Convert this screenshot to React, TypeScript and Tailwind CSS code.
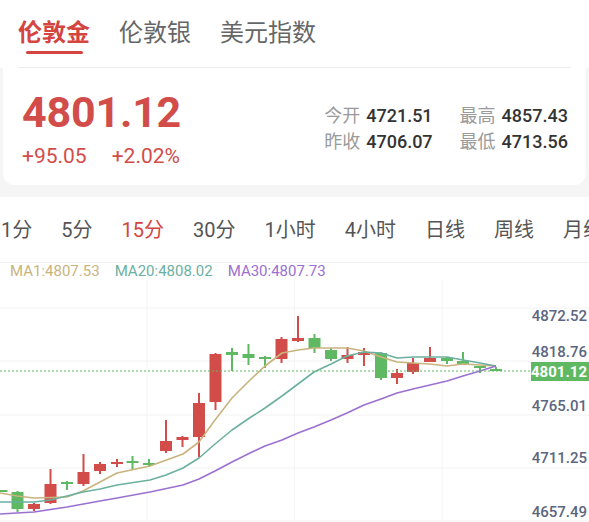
import React from "react";

const FONT = "font-['Roboto','Noto_Sans_CJK_SC',sans-serif]";

const RED = "#d24d4a";
const GREEN = "#5fb963";

// [cx, bodyTop, bodyBottom, wickTop, wickBottom, up]
const candles: [number, number, number, number, number, boolean][] = [
  [1.5, 490, 492, 490, 492, false],
  [17.5, 492, 509, 491, 512, false],
  [34, 504, 509, 503, 511, true],
  [50.5, 484, 503, 469, 504, true],
  [67, 482, 484, 481, 490, false],
  [83.5, 472, 484, 454, 486, true],
  [100, 464, 471, 462, 474, true],
  [117, 462, 464, 459, 467, true],
  [132.5, 461, 463, 456, 469, false],
  [149, 463, 465, 459, 467, false],
  [166, 441, 451, 420, 453, true],
  [182.5, 437, 440, 436, 447, true],
  [199, 403, 437, 393, 457, true],
  [215.5, 354, 402, 353, 410, true],
  [232, 352, 355, 348, 371, false],
  [248.5, 354, 358, 344, 365, false],
  [265, 357, 359, 356, 368, false],
  [281.5, 339, 359, 337, 363, true],
  [298, 338, 341, 316, 342, true],
  [314.5, 338, 348, 334, 353, false],
  [331, 350, 359, 348, 361, false],
  [347.5, 355, 359, 347, 363, true],
  [364, 352, 355, 348, 366, true],
  [381, 353, 378, 352, 380, false],
  [397, 373, 378, 369, 384, true],
  [413, 363, 372, 358, 374, true],
  [430, 358, 362, 347, 362, true],
  [447, 358, 361, 357, 364, false],
  [463, 361, 364, 352, 364, false],
  [480, 366, 368, 366, 373, false],
  [496, 369, 371, 367, 371, false],
];

const ma1 =
  "0,493 17,496 34,498 67,497 83,491 100,482 117,473 150,466 183,454 199,442 215,420 232,398 248,382 265,366 282,353 298,350 314,348 331,348 347,348 364,351 381,357 397,362 413,363 430,364 447,366 463,364 480,365 496,366";
const ma20 =
  "0,502 34,502 50,500 67,496 83,492 100,489 117,485 150,480 166,475 183,468 199,458 215,444 232,430 248,419 265,408 282,396 298,384 314,372 331,364 347,356 364,352 381,353 397,358 413,357 430,357 447,357 463,360 480,363 496,366";
const ma30 =
  "0,514 34,512 67,507 100,501 117,498 150,492 183,485 199,479 215,471 232,462 248,454 265,446 282,440 298,433 314,427 331,420 347,413 364,405 381,399 397,393 413,389 430,385 447,381 463,376 480,371 496,366";

const axis: [string, number][] = [
  ["4872.52", 316],
  ["4818.76", 352],
  ["4765.01", 406],
  ["4711.25", 458],
  ["4657.49", 512],
];

const periods = ["1分", "5分", "15分", "30分", "1小时", "4小时", "日线", "周线", "月线"];

function Stat({ label, value }: { label: string; value: string }) {
  return (
    <div className="flex items-baseline gap-[6px] text-[18px] leading-[26px]">
      <span className="text-[#9a9a9a]">{label}</span>
      <span className="font-medium text-[#333]">{value}</span>
    </div>
  );
}

function Chart() {
  return (
    <svg width={589} height={242} viewBox="0 280 589 242" className="block">
      {[308, 361, 415, 468, 521].map((y) => (
        <line key={y} x1={0} x2={589} y1={y} y2={y} stroke="#f2f2f2" strokeWidth={1} />
      ))}
      {[147, 294.5, 442].map((x) => (
        <line key={x} x1={x} x2={x} y1={280} y2={522} stroke="#f4f4f4" strokeWidth={1} />
      ))}

      {candles.map(([cx, bt, bb, wt, wb, up], i) => {
        const c = up ? RED : GREEN;
        return (
          <g key={i}>
            <rect x={cx - 1} y={wt} width={2} height={wb - wt} fill={c} />
            <rect x={cx - 6} y={bt} width={12} height={Math.max(bb - bt, 2)} fill={c} />
          </g>
        );
      })}

      <polyline points={ma1} fill="none" stroke="#c9b37e" strokeWidth={1.6} strokeLinejoin="round" />
      <polyline points={ma20} fill="none" stroke="#6cb0a0" strokeWidth={1.6} strokeLinejoin="round" />
      <polyline points={ma30} fill="none" stroke="#9b70d1" strokeWidth={1.6} strokeLinejoin="round" />

      <line x1={0} x2={531} y1={371} y2={371} stroke={GREEN} strokeWidth={1} strokeDasharray="2 2" />

      {axis.map(([t, y]) => (
        <text
          key={t}
          x={587}
          y={y}
          textAnchor="end"
          dominantBaseline="central"
          fill="#5c6680"
          fontSize={15}
          fontWeight={500}
          fontFamily="Roboto, sans-serif"
        >
          {t}
        </text>
      ))}
      <rect x={531} y={362} width={58} height={19} fill={GREEN} />
      <text
        x={587}
        y={371.5}
        textAnchor="end"
        dominantBaseline="central"
        fill="#fff"
        fontSize={15}
        fontWeight={700}
        fontFamily="Roboto, sans-serif"
      >
        4801.12
      </text>
    </svg>
  );
}

export default function App() {
  return (
    <div className={`w-[589px] h-[522px] overflow-hidden bg-[#f5f5f5] ${FONT}`}>
      {/* top tabs */}
      <header className="bg-white h-[68px] flex flex-col">
        <nav className="flex h-[67px] pl-[18px] pt-[18px] gap-[29px] text-[24px] leading-[30px]">
          <div className="flex flex-col">
            <span className="font-semibold text-[#d4453f]">伦敦金</span>
            <span className="mt-[3px] mx-auto h-[3px] w-[57px] rounded-full bg-[#d4453f]" />
          </div>
          <span className="text-[#666]">伦敦银</span>
          <span className="text-[#666]">美元指数</span>
        </nav>
        <div className="mx-[18px] h-px bg-[#ececec]" />
      </header>

      {/* quote card */}
      <section className="mx-[3px] h-[117px] bg-white rounded-b-[12px] flex justify-between">
        <div className="pl-[19px] pt-[22px] text-[#d24d4a]">
          <div className="text-[43px] leading-[44px] font-bold tracking-[-0.2px]">4801.12</div>
          <div className="mt-[12px] flex gap-[25px] text-[21px] leading-[21px]">
            <span>+95.05</span>
            <span>+2.02%</span>
          </div>
        </div>
        <div className="pr-[18px] pt-[35px] grid grid-cols-[auto_auto] gap-x-[27px] h-fit">
          <Stat label="今开" value="4721.51" />
          <Stat label="最高" value="4857.43" />
          <Stat label="昨收" value="4706.07" />
          <Stat label="最低" value="4713.56" />
        </div>
      </section>

      {/* chart section */}
      <section className="mt-[12px] bg-white">
        <div className="h-[65px] flex items-center gap-[29px] pl-[1px] text-[20px] text-[#555] whitespace-nowrap">
          {periods.map((p) => (
            <span key={p} className={p === "15分" ? "text-[#d4453f]" : ""}>
              {p}
            </span>
          ))}
        </div>
        <div className="h-px bg-[#f0f0f0]" />
        <div className="h-[17px] flex items-center gap-[15px] pl-[10px] text-[15px] leading-[17px]">
          <span className="text-[#c9b37e]">MA1:4807.53</span>
          <span className="text-[#6cb0a0]">MA20:4808.02</span>
          <span className="text-[#9b70d1]">MA30:4807.73</span>
        </div>
        <Chart />
      </section>
    </div>
  );
}
